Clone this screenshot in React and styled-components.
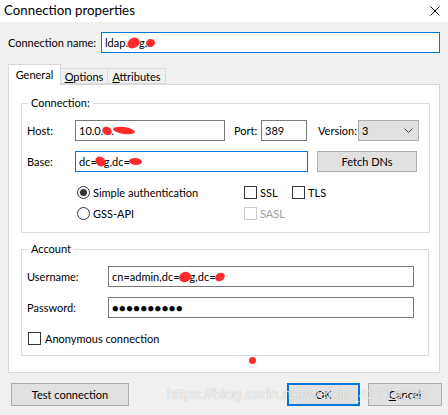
import React from "react";
import styled, { createGlobalStyle } from "styled-components";

const Global = createGlobalStyle`
  html, body {
    margin: 0;
    padding: 0;
    background: #f0f0f0;
  }
  body {
    font-family: Lato, "Liberation Sans", sans-serif;
    font-size: 11px;
    color: #000;
  }
`;

const Window = styled.div`
  position: relative;
  width: 448px;
  height: 415px;
  background: #f0f0f0;
  overflow: hidden;
`;

const TitleBar = styled.div`
  height: 22px;
  background: #fff;
  display: flex;
  align-items: center;
  justify-content: space-between;
  padding: 0 8px 0 4px;
  box-sizing: border-box;
`;

const Title = styled.span`
  font-size: 13.3px;
  line-height: 18px;
  margin-top: -2px;
`;

const Body = styled.div`
  padding: 10px 8px 0 8px;
`;

const Row = styled.div`
  display: flex;
  align-items: center;
  height: 21px;
  margin-top: ${({ top }) => top || 0}px;
`;

const Label = styled.span`
  width: ${({ w }) => (w ? `${w}px` : "auto")};
  margin-left: ${({ ml }) => ml || 0}px;
  flex: none;
  white-space: nowrap;
`;

const Field = styled.div`
  box-sizing: border-box;
  height: 21px;
  width: ${({ w }) => w}px;
  margin-left: ${({ ml }) => ml || 0}px;
  flex: none;
  background: #fff;
  border: 1px solid ${({ focus }) => (focus ? "#0078d7" : "#7a7a7a")};
  display: flex;
  align-items: center;
  padding: 0 3px;
  white-space: nowrap;
  overflow: hidden;
  letter-spacing: ${({ dots }) => (dots ? "0.5px" : "0")};
`;

const Blot = styled.span`
  display: inline-block;
  width: ${({ w }) => w}px;
  height: ${({ h }) => h || 9}px;
  margin: 0 ${({ m }) => (m === undefined ? -2 : m)}px;
  background: #ff2a2a;
  border-radius: 50%;
  transform: rotate(${({ r }) => r || -12}deg);
  vertical-align: middle;
`;

const TabStrip = styled.div`
  display: flex;
  align-items: flex-end;
  height: 20px;
  margin-top: 11px;
  position: relative;
  z-index: 1;
`;

const Tab = styled.div`
  box-sizing: border-box;
  height: ${({ active }) => (active ? 21 : 16)}px;
  margin-bottom: ${({ active }) => (active ? -1 : 0)}px;
  width: ${({ w }) => w}px;
  margin-left: ${({ ml }) => ml || 0}px;
  background: ${({ active }) => (active ? "#fff" : "#f0f0f0")};
  border: 1px solid #d9d9d9;
  border-bottom: ${({ active }) => (active ? "none" : "1px solid #d9d9d9")};
  display: flex;
  align-items: ${({ active }) => (active ? "flex-start" : "center")};
  justify-content: center;
  padding-top: ${({ active }) => (active ? 3 : 0)}px;
`;

const Pane = styled.div`
  box-sizing: border-box;
  width: 432px;
  height: 289px;
  background: #fff;
  border: 1px solid #d9d9d9;
  padding: 11px 0 0 12px;
`;

const Group = styled.fieldset`
  box-sizing: border-box;
  width: ${({ w }) => w}px;
  height: ${({ h }) => h}px;
  margin: ${({ top }) => top || 0}px 0 0 0;
  padding: 0 0 0 5px;
  border: 1px solid #dcdcdc;
  min-width: 0;
`;

const Legend = styled.legend`
  padding: 0 3px;
  margin-left: 1px;
  line-height: 14px;
`;

const Select = styled.div`
  box-sizing: border-box;
  width: ${({ w }) => w}px;
  height: 21px;
  flex: none;
  background: #e1e1e1;
  border: 1px solid #adadad;
  display: flex;
  align-items: center;
  justify-content: space-between;
  padding: 0 5px 0 3px;
`;

const Button = styled.div`
  box-sizing: border-box;
  width: ${({ w }) => w}px;
  height: ${({ h }) => h || 23}px;
  margin-left: ${({ ml }) => ml || 0}px;
  flex: none;
  background: #e1e1e1;
  border: ${({ primary }) => (primary ? "2px solid #0078d7" : "1px solid #adadad")};
  display: flex;
  align-items: center;
  justify-content: center;
`;

const OptionsGrid = styled.div`
  display: grid;
  grid-template-columns: 167px 48px auto;
  grid-auto-rows: 21px;
  padding-left: 50px;
  margin-top: 10px;
`;

const Option = styled.label`
  display: flex;
  align-items: center;
  gap: ${({ gap }) => gap || 3}px;
  margin-left: ${({ ml }) => ml || 0}px;
  color: ${({ disabled }) => (disabled ? "#a0a0a0" : "#000")};
`;

const Radio = styled.span`
  box-sizing: border-box;
  width: 13px;
  height: 13px;
  border-radius: 50%;
  border: 1px solid #333;
  background: #fff;
  display: flex;
  align-items: center;
  justify-content: center;
  &::after {
    content: "";
    width: 7px;
    height: 7px;
    border-radius: 50%;
    background: ${({ checked }) => (checked ? "#333" : "transparent")};
  }
`;

const Check = styled.span`
  box-sizing: border-box;
  width: 13px;
  height: 13px;
  border: 1px solid ${({ disabled }) => (disabled ? "#cccccc" : "#333")};
  background: #fff;
  flex: none;
`;

const Footer = styled.div`
  display: flex;
  align-items: center;
  margin-top: 10px;
`;

const U = styled.span`
  text-decoration: underline;
  text-underline-offset: 1px;
`;

const Watermark = styled.div`
  position: absolute;
  left: 167px;
  top: 385px;
  font-family: "Liberation Sans", Arial, sans-serif;
  font-size: 15.5px;
  letter-spacing: -0.1px;
  color: rgba(255, 255, 255, 0.8);
  text-shadow: 0 0 1px rgba(0, 0, 0, 0.3);
  white-space: nowrap;
  pointer-events: none;
`;

const Dot = styled.span`
  position: absolute;
  left: 249px;
  top: 357px;
  width: 7px;
  height: 7px;
  border-radius: 50%;
  background: #ff2a2a;
`;

const CloseIcon = () => (
  <svg width="10" height="10" viewBox="0 0 10 10">
    <path d="M0.5 0.5 L9.5 9.5 M9.5 0.5 L0.5 9.5" stroke="#000" strokeWidth="1" />
  </svg>
);

const Chevron = () => (
  <svg width="9" height="5" viewBox="0 0 9 5">
    <path d="M0.5 0.5 L4.5 4.5 L8.5 0.5" stroke="#444" fill="none" strokeWidth="1" />
  </svg>
);

export default function App() {
  return (
    <Window>
      <Global />
      <TitleBar>
        <Title>Connection properties</Title>
        <CloseIcon />
      </TitleBar>
      <Body>
        <Row>
          <Label w={93}>Connection name:</Label>
          <Field w={339} focus>
            ldap.<Blot w={13} h={10} m={-1} r={-30} />g.<Blot w={9} h={8} m={-1} />
          </Field>
        </Row>

        <TabStrip>
          <Tab w={53} active>General</Tab>
          <Tab w={48} ml={-1}>
            <span><U>O</U>ptions</span>
          </Tab>
          <Tab w={59} ml={-1}>
            <span><U>A</U>ttributes</span>
          </Tab>
        </TabStrip>

        <Pane>
          <Group w={409} h={137} top={0}>
            <Legend>Connection:</Legend>
            <Row top={10}>
              <Label w={48}>Host:</Label>
              <Field w={150}>
                10.0.<Blot w={8} h={10} m={0} r={-60} />.<Blot w={22} h={7} m={-1} r={8} />
              </Field>
              <Label ml={9} w={27}>Port:</Label>
              <Field w={46}>389</Field>
              <Label ml={11} w={40}>Version:</Label>
              <Select w={61}>
                <span>3</span>
                <Chevron />
              </Select>
            </Row>
            <Row top={10}>
              <Label w={48}>Base:</Label>
              <Field w={233} focus>
                dc=<Blot w={9} h={11} m={-1} r={-50} />g,dc=<Blot w={13} h={7} m={-1} r={5} />
              </Field>
              <Button w={100} h={21} ml={9}>Fetch DNs</Button>
            </Row>
            <OptionsGrid>
              <Option>
                <Radio checked />
                Simple authentication
              </Option>
              <Option>
                <Check />
                SSL
              </Option>
              <Option>
                <Check />
                TLS
              </Option>
              <Option>
                <Radio />
                GSS-API
              </Option>
              <Option disabled>
                <Check disabled />
                SASL
              </Option>
            </OptionsGrid>
          </Group>

          <Group w={408} h={114} top={9}>
            <Legend>Account</Legend>
            <Row top={10}>
              <Label w={81}>Username:</Label>
              <Field w={306}>
                cn=admin,dc=<Blot w={12} h={10} m={-1} r={-20} />g,dc=<Blot w={10} h={8} m={-1} r={-30} />
              </Field>
            </Row>
            <Row top={10}>
              <Label w={81}>Password:</Label>
              <Field w={306} dots>
                ●●●●●●●●●●
              </Field>
            </Row>
            <Row top={10}>
              <Option gap={4} ml={1}>
                <Check />
                Anonymous connection
              </Option>
            </Row>
          </Group>
        </Pane>

        <Footer>
          <Button w={118} ml={3}>Test connection</Button>
          <Button w={73} ml={158} primary>OK</Button>
          <Button w={74} ml={8}>
            <span><U>C</U>ancel</span>
          </Button>
        </Footer>
      </Body>
      <Dot />
      <Watermark>https://blog.csdn.net/weixin_42715225</Watermark>
    </Window>
  );
}
